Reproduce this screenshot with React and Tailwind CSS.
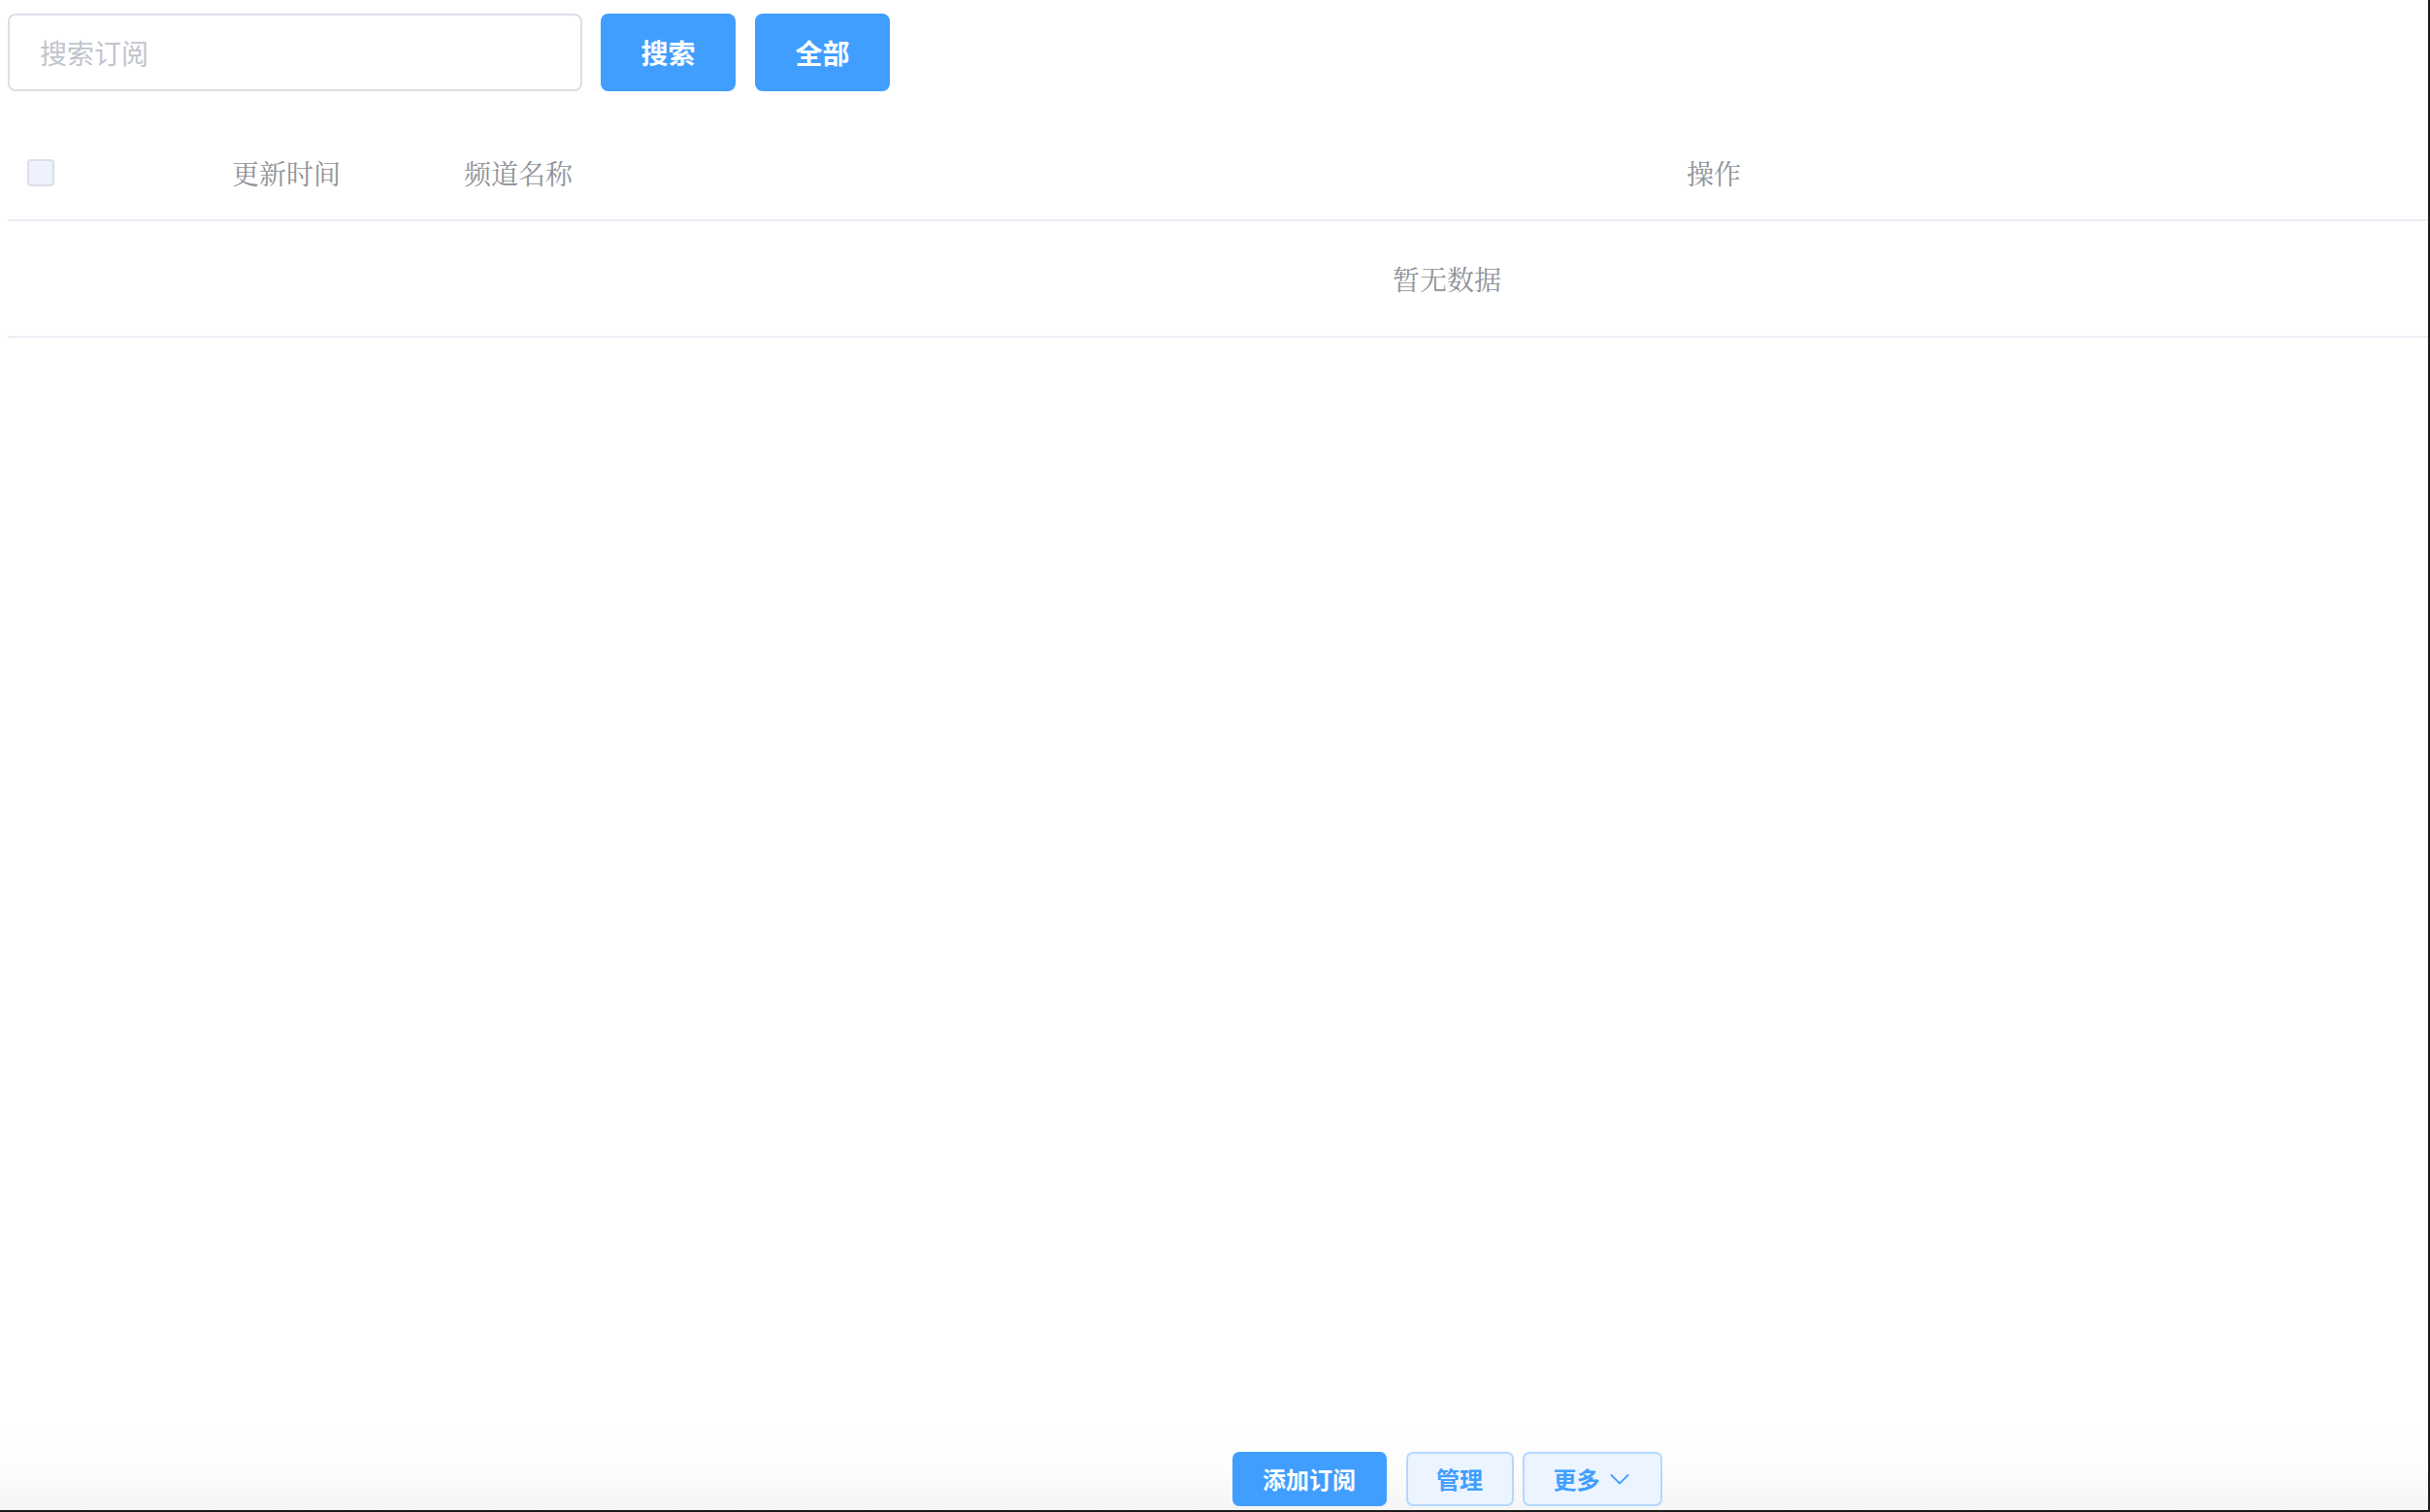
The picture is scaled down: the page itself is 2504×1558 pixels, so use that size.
import React from "react";

const sans = "font-['Helvetica_Neue','Noto_Sans_CJK_SC','Noto_Sans',sans-serif]";
const serif = "font-['Noto_Serif_CJK_SC','AR_PL_UMing_CN','Noto_Sans_CJK_SC',serif]";

function Chevron() {
  return (
    <svg width="24" height="24" viewBox="0 0 24 24" fill="none" className="ml-[8px]">
      <polyline points="3.5,8 12,16.5 20.5,8" stroke="#409eff" strokeWidth="1.8" strokeLinecap="round" strokeLinejoin="round" />
    </svg>
  );
}

export default function App() {
  return (
    <div className="w-[2504px] h-[1558px] bg-white border-r-2 border-b-2 border-[#1c1c1c] overflow-hidden">
      <div className="w-[2982px] h-full flex flex-col">
        <div className="flex-1 px-[8px] pt-[14px]">
          {/* search row */}
          <div className="flex items-center gap-[19px]">
            <div className="w-[592px] h-[80px] border-2 border-[#dcdfe6] rounded-[8px] flex items-center pl-[31px]">
              <span className={`${sans} text-[28px] text-[#c0c4cc]`}>搜索订阅</span>
            </div>
            <div className="flex gap-[20px]">
              <button className={`${sans} w-[139px] h-[80px] rounded-[8px] bg-[#409eff] text-white text-[28px] font-bold`}>搜索</button>
              <button className={`${sans} w-[139px] h-[80px] rounded-[8px] bg-[#409eff] text-white text-[28px] font-bold`}>全部</button>
            </div>
          </div>

          {/* table */}
          <div className="mt-[40px]">
            <div className="flex items-center h-[94px] pb-[5px] border-b-2 border-[#ebeef5]">
              <div className="w-[231px] pl-[20px] flex items-center">
                <div className="w-[28px] h-[28px] rounded-[4px] border-2 border-[#dcdfe6] bg-[#edf2fc]"></div>
              </div>
              <div className={`${serif} w-[239px] text-[28px] text-[#909399]`}>更新时间</div>
              <div className={`${serif} w-[1260px] text-[28px] text-[#909399]`}>频道名称</div>
              <div className={`${serif} flex-1 text-[28px] text-[#909399]`}>操作</div>
            </div>
            <div className="h-[120px] border-b-2 border-[#ebeef5] flex items-center justify-center">
              <span className={`${serif} text-[28px] text-[#909399]`}>暂无数据</span>
            </div>
          </div>
        </div>

        {/* footer */}
        <div className="h-[86px] bg-gradient-to-b from-white via-[#fdfdfd] to-[#f5f5f5] flex items-end justify-center pb-[4px]">
          <div className="flex items-center">
            <button className={`${sans} w-[159px] h-[56px] rounded-[7px] bg-[#409eff] text-white text-[24px] font-bold`}>添加订阅</button>
            <button className={`${sans} ml-[20px] w-[111px] h-[56px] rounded-[7px] bg-[#ecf5ff] border-2 border-[#b3d8ff] text-[#409eff] text-[24px] font-bold`}>管理</button>
            <button className={`${sans} ml-[9px] w-[144px] h-[56px] rounded-[7px] bg-[#ecf5ff] border-2 border-[#b3d8ff] text-[#409eff] text-[24px] font-bold flex items-center pl-[30px]`}>
              更多
              <Chevron />
            </button>
          </div>
        </div>
      </div>
    </div>
  );
}
